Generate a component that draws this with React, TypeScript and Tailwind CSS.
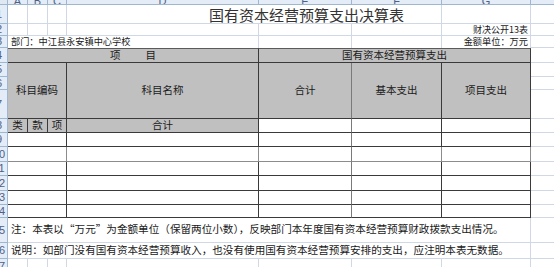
import React from "react";

// Excel-like sheet: column widths A..G are fixed, H fills the rest
const grid = "border-[#d0d7e5]";
const line = "border-[#3a3a3a]";
const gray = "bg-[#c0c0c0]";

const RowHead = ({ n, h }: { n: string; h: string }) => (
  <div className={`${h} w-[8px] shrink-0 overflow-hidden flex justify-end items-center bg-[#e4ecf7] border-r border-b border-[#9eb6ce]`}>
    <span className="w-[16px] shrink-0 text-center text-[11px] leading-none text-[#4d6185] font-['Liberation_Sans',sans-serif]">{n}</span>
  </div>
);

const ColHead = ({ w, l }: { w: string; l: string }) => (
  <div className={`${w} h-[5px] shrink-0 overflow-hidden flex items-end justify-center bg-[#e4ecf7] border-r border-b border-[#9eb6ce]`}>
    <span className="text-[11px] leading-[11px] mb-[-3px] text-[#4d6185] font-['Liberation_Sans',sans-serif]">{l}</span>
  </div>
);

const dataRows = [
  { n: "9", h: "h-[14px]", b: line },
  { n: "10", h: "h-[15px]", b: "border-[#8c8c8c]" },
  { n: "11", h: "h-[14px]", b: line },
  { n: "12", h: "h-[15px]", b: line },
  { n: "13", h: "h-[14px]", b: line },
  { n: "14", h: "h-[13px]", b: line },
];

export default function App() {
  return (
    <div className="w-[554px] h-[267px] overflow-hidden bg-white text-[#1a1a1a] font-['Noto_Sans_CJK_SC',sans-serif]">
      {/* column headers */}
      <div className="flex">
        <div className="w-[8px] h-[5px] shrink-0 bg-[#dfe7f2] border-r border-b border-[#9eb6ce]"></div>
        <ColHead w="w-[20px]" l="A" />
        <ColHead w="w-[20px]" l="B" />
        <ColHead w="w-[19px]" l="C" />
        <ColHead w="w-[192px]" l="D" />
        <ColHead w="w-[93px]" l="E" />
        <ColHead w="w-[90px]" l="F" />
        <ColHead w="w-[89px]" l="G" />
        <div className="flex-1 h-[5px] bg-[#e4ecf7] border-b border-[#9eb6ce]"></div>
      </div>

      {/* row 1: title */}
      <div className="flex h-[19px]">
        <RowHead n="1" h="h-[19px]" />
        <div className={`w-[20px] shrink-0 border-r border-b ${grid}`}></div>
        <div className={`w-[20px] shrink-0 border-r border-b ${grid}`}></div>
        <div className={`w-[19px] shrink-0 border-r border-b ${grid}`}></div>
        <div className={`w-[375px] shrink-0 flex items-center pl-[142px] border-r border-b ${grid}`}>
          <span className="text-[15px] leading-none text-[#333] whitespace-nowrap">国有资本经营预算支出决算表</span>
        </div>
        <div className={`w-[89px] shrink-0 border-r border-b ${grid}`}></div>
        <div className={`flex-1 border-b ${grid}`}></div>
      </div>

      {/* row 2 */}
      <div className="flex h-[12px]">
        <RowHead n="2" h="h-[12px]" />
        <div className={`w-[20px] shrink-0 border-r border-b ${grid}`}></div>
        <div className={`w-[20px] shrink-0 border-r border-b ${grid}`}></div>
        <div className={`w-[19px] shrink-0 border-r border-b ${grid}`}></div>
        <div className={`w-[192px] shrink-0 border-r border-b ${grid}`}></div>
        <div className={`w-[93px] shrink-0 border-r border-b ${grid}`}></div>
        <div className={`w-[90px] shrink-0 border-r border-b ${grid}`}></div>
        <div className={`w-[89px] shrink-0 flex items-center justify-end pr-[2px] border-r border-b ${grid}`}>
          <span className="text-[9px] leading-none whitespace-nowrap">财决公开13表</span>
        </div>
        <div className={`flex-1 border-b ${grid}`}></div>
      </div>

      {/* row 3 */}
      <div className="flex h-[12px]">
        <RowHead n="3" h="h-[12px]" />
        <div className={`w-[251px] shrink-0 flex items-center pl-[3px] border-r ${grid}`}>
          <span className="text-[9.2px] leading-none whitespace-nowrap">部门：中江县永安镇中心学校</span>
        </div>
        <div className={`w-[93px] shrink-0 border-r ${grid}`}></div>
        <div className={`w-[90px] shrink-0 border-r ${grid}`}></div>
        <div className={`w-[89px] shrink-0 flex items-center justify-end pr-[2px] border-r ${grid}`}>
          <span className="text-[9.2px] leading-none whitespace-nowrap">金额单位：万元</span>
        </div>
        <div className={`flex-1 border-b ${grid}`}></div>
      </div>

      {/* row 4: group headers */}
      <div className="flex h-[15px]">
        <RowHead n="4" h="h-[15px]" />
        <div className={`w-[251px] shrink-0 flex items-center justify-center gap-[25px] ${gray} border-t border-t-[#5a5a5a] border-b border-r ${line}`}>
          <span className="text-[10.5px] leading-none">项</span>
          <span className="text-[10.5px] leading-none">目</span>
        </div>
        <div className={`w-[272px] shrink-0 flex items-center justify-center ${gray} border-t border-t-[#5a5a5a] border-b border-r ${line}`}>
          <span className="text-[10.5px] leading-none whitespace-nowrap">国有资本经营预算支出</span>
        </div>
        <div className={`flex-1 border-b ${grid}`}></div>
      </div>

      {/* rows 5-7: column headers */}
      <div className="flex h-[56px]">
        <div className="w-[8px] shrink-0 flex flex-col">
          <RowHead n="5" h="h-[14px]" />
          <RowHead n="6" h="h-[13px]" />
          <RowHead n="7" h="h-[29px]" />
        </div>
        <div className={`w-[59px] shrink-0 flex items-center justify-center ${gray} border-r border-b ${line}`}>
          <span className="text-[10.5px] leading-none whitespace-nowrap">科目编码</span>
        </div>
        <div className={`w-[192px] shrink-0 flex items-center justify-center ${gray} border-r border-b ${line}`}>
          <span className="text-[10.5px] leading-none whitespace-nowrap">科目名称</span>
        </div>
        <div className={`w-[93px] shrink-0 flex items-center justify-center ${gray} border-b ${line} border-r border-r-[#7a7a7a]`}>
          <span className="text-[10.5px] leading-none whitespace-nowrap">合计</span>
        </div>
        <div className={`w-[90px] shrink-0 flex items-center justify-center ${gray} border-r border-b ${line}`}>
          <span className="text-[10.5px] leading-none whitespace-nowrap">基本支出</span>
        </div>
        <div className={`w-[89px] shrink-0 flex items-center justify-center ${gray} border-r border-b ${line}`}>
          <span className="text-[10.5px] leading-none whitespace-nowrap">项目支出</span>
        </div>
        <div className="flex-1 flex flex-col">
          <div className={`h-[14px] border-b ${grid}`}></div>
          <div className={`h-[13px] border-b ${grid}`}></div>
          <div className={`h-[29px] border-b ${grid}`}></div>
        </div>
      </div>

      {/* row 8: 类 款 项 合计 */}
      <div className="flex h-[14px]">
        <RowHead n="8" h="h-[14px]" />
        <div className={`w-[20px] shrink-0 flex items-center justify-center ${gray} border-r border-b ${line}`}>
          <span className="text-[10.5px] leading-none">类</span>
        </div>
        <div className={`w-[20px] shrink-0 flex items-center justify-center ${gray} border-r border-b ${line}`}>
          <span className="text-[10.5px] leading-none">款</span>
        </div>
        <div className={`w-[19px] shrink-0 flex items-center justify-center ${gray} border-r border-b ${line}`}>
          <span className="text-[10.5px] leading-none">项</span>
        </div>
        <div className={`w-[192px] shrink-0 flex items-center justify-center ${gray} border-r border-b ${line}`}>
          <span className="text-[10.5px] leading-none">合计</span>
        </div>
        <div className={`w-[93px] shrink-0 border-b ${line} border-r border-r-[#7a7a7a]`}></div>
        <div className={`w-[90px] shrink-0 border-r border-b ${line}`}></div>
        <div className={`w-[89px] shrink-0 border-r border-b ${line}`}></div>
        <div className={`flex-1 border-b ${grid}`}></div>
      </div>

      {/* rows 9-14: empty data rows */}
      {dataRows.map((r) => (
        <div key={r.n} className={`flex ${r.h}`}>
          <RowHead n={r.n} h={r.h} />
          <div className={`w-[59px] shrink-0 border-r ${line} border-b ${r.b}`}></div>
          <div className={`w-[192px] shrink-0 border-r ${line} border-b ${r.b}`}></div>
          <div className={`w-[93px] shrink-0 border-r border-r-[#7a7a7a] border-b ${r.b}`}></div>
          <div className={`w-[90px] shrink-0 border-r ${line} border-b ${r.b}`}></div>
          <div className={`w-[89px] shrink-0 border-r ${line} border-b ${r.b}`}></div>
          <div className={`flex-1 border-b ${grid}`}></div>
        </div>
      ))}

      {/* row 15: note */}
      <div className="flex h-[25px]">
        <RowHead n="15" h="h-[25px]" />
        <div className={`w-[523px] shrink-0 flex items-center pl-[3px] pb-[2px] border-r border-b ${grid}`}>
          <span className="text-[10.6px] leading-none whitespace-nowrap">注：本表以“万元”为金额单位（保留两位小数），反映部门本年度国有资本经营预算财政拨款支出情况。</span>
        </div>
        <div className={`flex-1 border-b ${grid}`}></div>
      </div>

      {/* row 16: explanation */}
      <div className="flex h-[16px]">
        <RowHead n="16" h="h-[16px]" />
        <div className={`w-[523px] shrink-0 flex items-center pl-[3px] border-r border-b ${grid}`}>
          <span className="text-[10.6px] leading-none whitespace-nowrap">说明：如部门没有国有资本经营预算收入，也没有使用国有资本经营预算安排的支出，应注明本表无数据。</span>
        </div>
        <div className={`flex-1 border-b ${grid}`}></div>
      </div>

      {/* row 17 */}
      <div className="flex h-[16px]">
        <RowHead n="17" h="h-[16px]" />
        <div className={`w-[20px] shrink-0 border-r border-b ${grid}`}></div>
        <div className={`w-[20px] shrink-0 border-r border-b ${grid}`}></div>
        <div className={`w-[19px] shrink-0 border-r border-b ${grid}`}></div>
        <div className={`w-[192px] shrink-0 border-r border-b ${grid}`}></div>
        <div className={`w-[93px] shrink-0 border-r border-b ${grid}`}></div>
        <div className={`w-[90px] shrink-0 border-r border-b ${grid}`}></div>
        <div className={`w-[89px] shrink-0 border-r border-b ${grid}`}></div>
        <div className={`flex-1 border-b ${grid}`}></div>
      </div>
    </div>
  );
}
